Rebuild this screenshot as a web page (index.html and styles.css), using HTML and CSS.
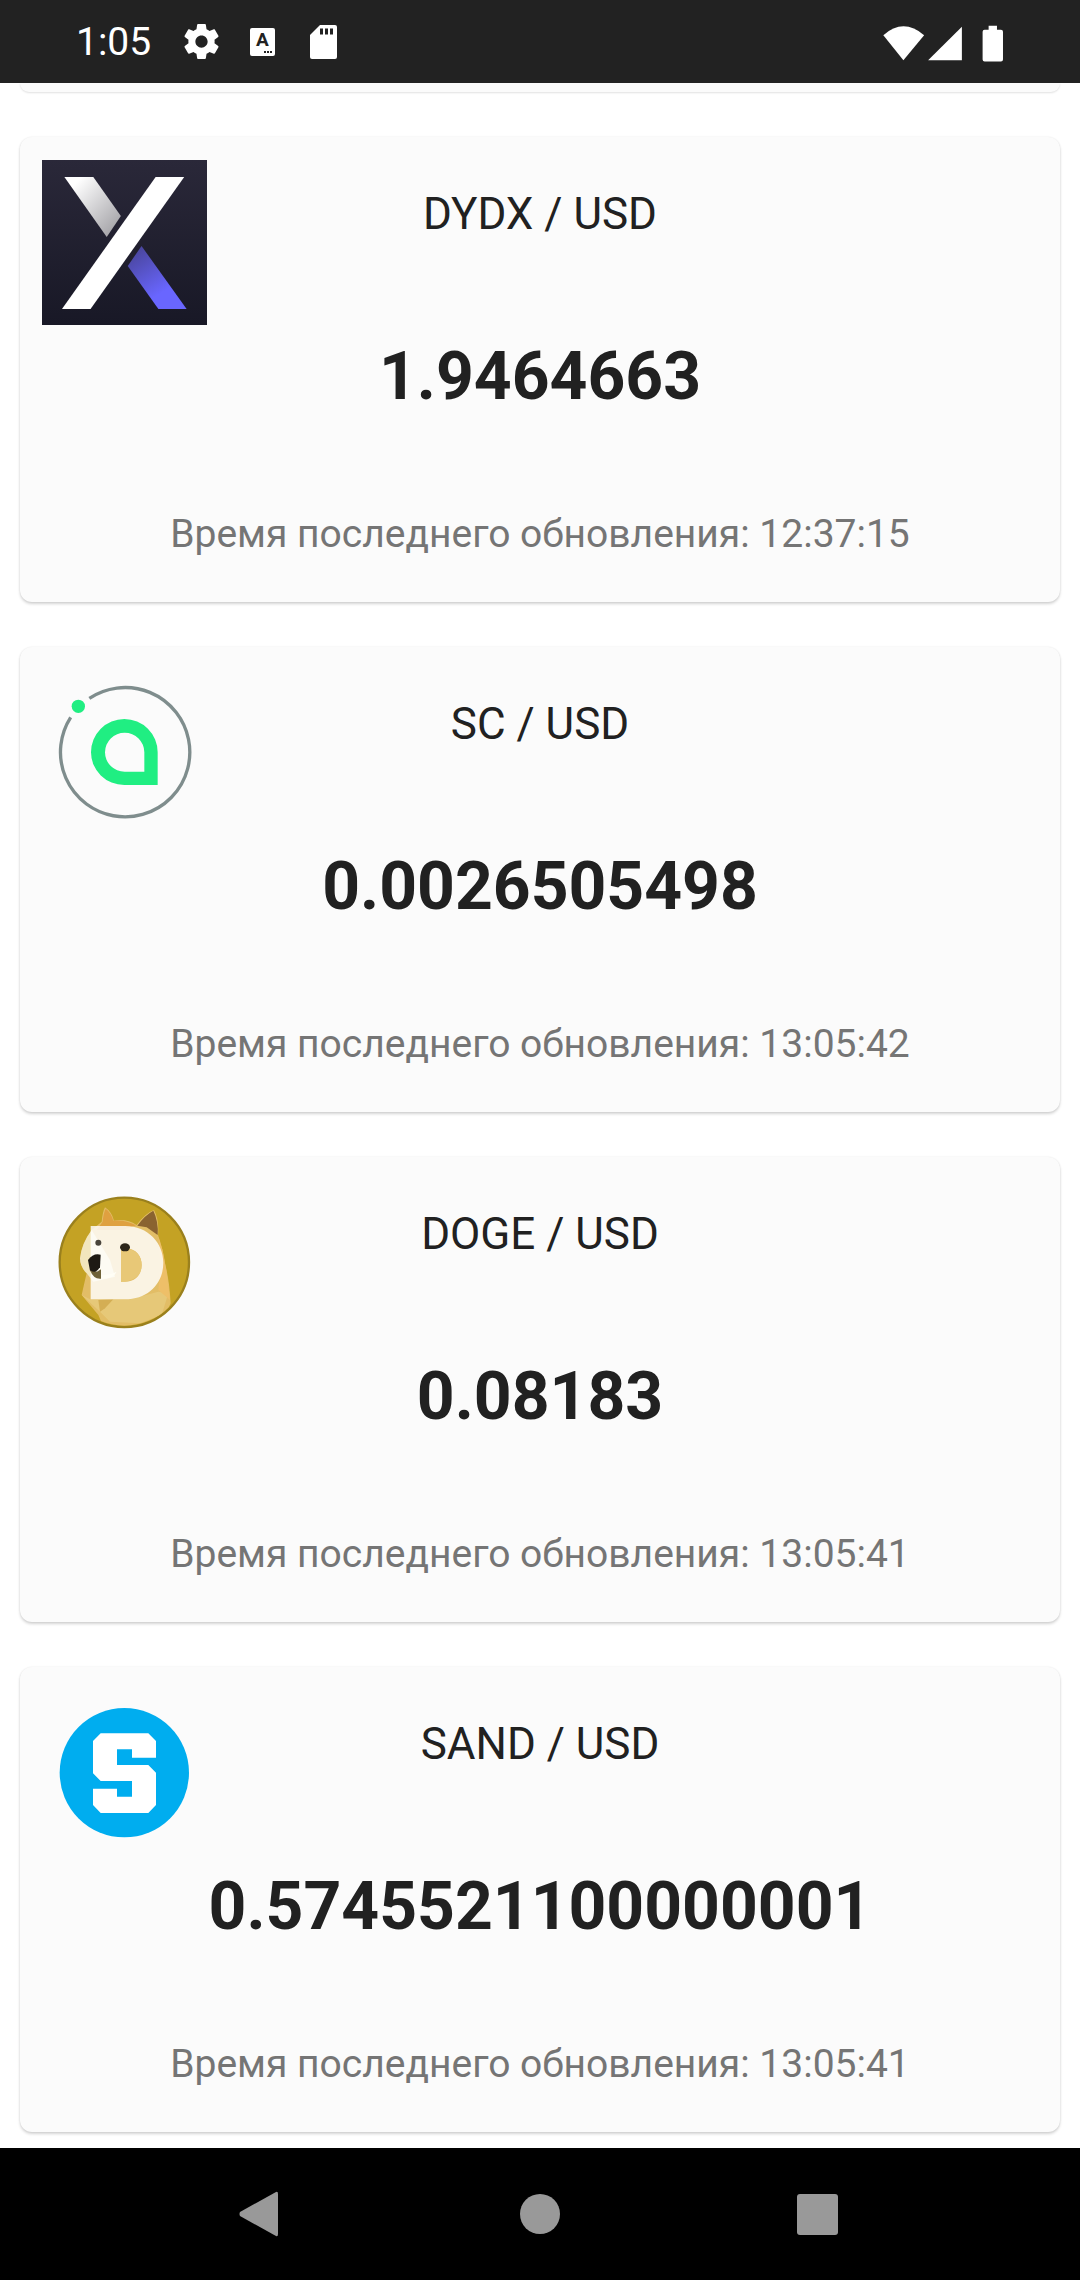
FILE: index.html
```html
<!DOCTYPE html>
<html lang="ru">
<head>
<meta charset="utf-8">
<title>Курсы</title>
<link rel="stylesheet" href="styles.css">
</head>
<body>
<div class="screen">
  <header class="status">
    <div class="status-left">
      <span class="clock">1:05</span>
      <svg class="ic-gear" viewBox="2 2 20 20"><path fill="#fff" d="M19.43 12.98c.04-.32.07-.64.07-.98s-.03-.66-.07-.98l2.11-1.65c.19-.15.24-.42.12-.64l-2-3.46c-.12-.22-.39-.3-.61-.22l-2.49 1c-.52-.4-1.08-.73-1.69-.98l-.38-2.65C14.46 2.18 14.25 2 14 2h-4c-.25 0-.46.18-.49.42l-.38 2.65c-.61.25-1.17.59-1.69.98l-2.49-1c-.23-.09-.49 0-.61.22l-2 3.46c-.13.22-.07.49.12.64l2.11 1.65c-.04.32-.07.65-.07.98s.03.66.07.98l-2.11 1.65c-.19.15-.24.42-.12.64l2 3.46c.12.22.39.3.61.22l2.49-1c.52.4 1.08.73 1.69.98l.38 2.65c.03.24.24.42.49.42h4c.25 0 .46-.18.49-.42l.38-2.65c.61-.25 1.17-.59 1.69-.98l2.49 1c.23.09.49 0 .61-.22l2-3.46c.12-.22.07-.49-.12-.64l-2.11-1.65zM12 15.5c-1.93 0-3.5-1.57-3.5-3.5s1.57-3.5 3.5-3.5 3.5 1.57 3.5 3.5-1.57 3.5-3.5 3.5z"/></svg>
      <svg class="ic-a" viewBox="0 0 25 28">
        <rect width="25" height="28" rx="2" fill="#fff"/>
        <text x="12.500" y="18" class="ic-a-letter">A</text>
        <rect x="14" y="23" width="2" height="2" fill="#222"/><rect x="17" y="23" width="2" height="2" fill="#222"/><rect x="20" y="23" width="2" height="2" fill="#222"/>
      </svg>
      <svg class="ic-sd" viewBox="0 0 27 34">
        <path fill="#fff" d="M10 0H25a2 2 0 0 1 2 2V32a2 2 0 0 1-2 2H2a2 2 0 0 1-2-2V10Z"/>
        <path fill="#222" d="M10 3.500h3V9.500h-3ZM15 3.500h3V9.500h-3ZM20 3.500h3V9.500h-3Z"/>
      </svg>
    </div>
    <svg class="ic-right" viewBox="300 70 380 116">
      <path fill="#fff" d="M370 178L310 103Q370 50 432 103Z"/>
      <path fill="#fff" d="M545 78V178H444Z"/>
      <path fill="#fff" d="M625 75H650V87H662Q668 87 668 93V176Q668 182 662 182H613Q607 182 607 176V93Q607 87 613 87H625Z"/>
    </svg>
  </header>

  <main class="list">
    <div class="card card-stub"></div>

    <article class="card">
      <svg class="coin" viewBox="122 480 495 495">
        <defs>
          <linearGradient id="xbg" x1="0" y1="0" x2="0" y2="1"><stop offset="0" stop-color="#2a2839"/><stop offset="1" stop-color="#181826"/></linearGradient>
          <linearGradient id="xgrey" x1="0" y1="0" x2="1" y2="1"><stop offset="0.15" stop-color="#fff"/><stop offset="1" stop-color="#99989d"/></linearGradient>
          <linearGradient id="xblue" x1="0" y1="0" x2="0.6" y2="1"><stop offset="0" stop-color="#45418f"/><stop offset="0.8" stop-color="#6966ff"/></linearGradient>
        </defs>
        <rect x="122" y="480" width="495" height="495" fill="url(#xbg)"/>
        <g transform="translate(122 0) scale(1.033 1) translate(-122 0)">
          <path fill="url(#xgrey)" d="M187 531H271L351 648L310 711Z"/>
          <path fill="url(#xblue)" d="M411 738L542 927H460L371 798Z"/>
          <path fill="#fff" d="M452 531H535L263 927H180Z"/>
        </g>
      </svg>
      <div class="info">
        <h2 class="pair">DYDX / USD</h2>
        <p class="price">1.9464663</p>
        <p class="updated">Время последнего обновления: 12:37:15</p>
      </div>
    </article>

    <article class="card">
      <svg class="coin" viewBox="36 0 495 495">
        <path fill="none" stroke="#7f8d8d" stroke-width="10" d="M178 85A194 194 0 1 1 122 142"/>
        <circle cx="145" cy="109" r="20" fill="#20ee82"/>
        <path fill="#20ee82" fill-rule="evenodd" d="M183 247A100 100 0 0 1 383 247V345H283A100 98 0 0 1 183 247ZM225 247A59 59 0 0 1 343 247V305H284A59 58 0 0 1 225 247Z"/>
      </svg>
      <div class="info">
        <h2 class="pair">SC / USD</h2>
        <p class="price">0.0026505498</p>
        <p class="updated">Время последнего обновления: 13:05:42</p>
      </div>
    </article>

    <article class="card">
      <svg class="coin" viewBox="36 0 495 495">
        <defs><clipPath id="dclip"><circle cx="283" cy="247" r="190"/></clipPath></defs>
        <circle cx="283" cy="247" r="194" fill="#c4a224" stroke="#9a801d" stroke-width="7"/>
        <g clip-path="url(#dclip)">
          <path fill="#e2bd66" d="M215 125Q218 95 225 82Q245 95 252 122Q290 115 320 135Q345 100 372 90Q388 120 384 165Q400 210 405 250Q418 300 422 370L395 430L330 450L220 440L205 405L155 345Q165 300 170 280Q150 260 150 235Q155 190 185 150Z"/>
          <path fill="#dfa040" d="M218 125Q220 100 227 86Q243 98 250 122Q285 118 318 136L280 150H200Z"/>
          <path fill="#8a6330" d="M322 137Q345 105 370 92Q386 125 383 165L350 142Z"/>
          <path fill="#f2e6bd" d="M150 235Q155 190 185 150L240 240L255 290L190 305L170 280Q150 260 150 235Z"/>
          <path fill="#e6c878" d="M155 345L210 395L240 425L330 430L395 405L415 340L385 335L300 358H180Z"/>
          <path fill="#d4ae54" d="M205 360L250 358L225 385L210 395Z"/>
          <path fill="#eebf68" d="M385 170Q400 210 405 250Q415 300 420 360L385 330Q395 250 385 170Z"/>
        </g>
        <path fill="#fff" fill-opacity=".82" fill-rule="evenodd" d="M182 138H285C355 138 400 190 400 248C400 310 355 358 285 358H182ZM273 205V305H285C320 305 335 280 335 255C335 230 320 205 285 205Z"/>
        <path fill="#e8c877" d="M273 205H290C320 210 335 230 335 255C335 280 320 300 285 305H273Z"/>
        <path fill="#1e1a14" d="M174 240Q190 218 212 224L210 262Q195 285 180 272Z"/>
        <path fill="#6f6238" d="M180 270Q195 282 213 268L213 296Q190 298 180 270Z"/>
        <path fill="#fffef5" d="M213 285Q240 285 260 275Q250 297 213 296Z"/>
        <ellipse cx="205" cy="188" rx="9" ry="9" fill="#4a453c"/>
        <ellipse cx="285" cy="202" rx="15" ry="12" fill="#2c261a"/>
      </svg>
      <div class="info">
        <h2 class="pair">DOGE / USD</h2>
        <p class="price">0.08183</p>
        <p class="updated">Время последнего обновления: 13:05:41</p>
      </div>
    </article>

    <article class="card">
      <svg class="coin" viewBox="36 0 495 495">
        <circle cx="283" cy="248" r="194" fill="#00adef"/>
        <path fill="#fff" d="M212 130H355L378 153V203H306V178H261V225H355L378 248V345L355 369H212L189 345V296H261V320H306V273H212L189 250V153Z"/>
      </svg>
      <div class="info">
        <h2 class="pair">SAND / USD</h2>
        <p class="price">0.5745521100000001</p>
        <p class="updated">Время последнего обновления: 13:05:41</p>
      </div>
    </article>
  </main>

  <nav class="navbar">
    <svg class="nav-back" viewBox="0 0 39 46"><path fill="#999" d="M37 1Q39 0 39 3V43Q39 46 37 45L1 25Q0 23 1 21Z"/></svg>
    <span class="nav-home"></span>
    <span class="nav-recent"></span>
  </nav>
</div>
</body>
</html>
```

FILE: styles.css
```css
* { box-sizing: border-box; }
html, body { margin: 0; padding: 0; background: #fff; }
body { font-family: Roboto, "Noto Sans", sans-serif; }
.screen {
  width: 1080px;
  height: 2280px;
  display: flex;
  flex-direction: column;
  overflow: hidden;
}
.status {
  height: 83px;
  flex: none;
  background: #222;
  display: flex;
  align-items: center;
  justify-content: space-between;
  padding: 0 73px 0 76px;
  position: relative;
  z-index: 1;
}
.status-left { display: flex; align-items: center; }
.clock { color: #fff; font-size: 39px; line-height: 44px; margin-right: 33px; }
.ic-gear { width: 35px; height: 35px; margin-right: 31px; display: block; }
.ic-a { width: 25px; height: 28px; margin-right: 35px; display: block; }
.ic-a-letter { font: 700 19px Roboto, sans-serif; fill: #222; text-anchor: middle; }
.ic-sd { width: 27px; height: 34px; display: block; }
.ic-right { width: 127px; height: 39px; display: block; margin-top: 3px; }

.list {
  flex: 1;
  min-height: 0;
  display: flex;
  flex-direction: column;
  gap: 45px;
  padding: 0 20px;
  overflow: hidden;
}
.card {
  flex: none;
  height: 465px;
  background: #fbfbfb;
  border-radius: 12px;
  box-shadow: 0 2px 3px rgba(0, 0, 0, .17), 0 0 2px rgba(0, 0, 0, .08);
  display: grid;
  grid-template: 1fr / 1fr;
}
.card-stub {
  height: 9px;
  border-radius: 0 0 12px 12px;
  box-shadow: 0 1px 2px rgba(0, 0, 0, .12);
}
.coin {
  grid-area: 1 / 1;
  width: 165px;
  height: 165px;
  margin: 23px 0 0 22px;
  display: block;
}
.info {
  grid-area: 1 / 1;
  display: flex;
  flex-direction: column;
  align-items: center;
  padding-top: 51px;
}
.pair { margin: 0; font-size: 44px; line-height: 52px; font-weight: 400; color: #212121; }
.price { margin: 98px 0 0; font-size: 66px; line-height: 78px; font-weight: 700; color: #212121; }
.updated { margin: 95px 0 0; font-size: 39px; line-height: 46px; color: #757575; }

.navbar {
  height: 132px;
  flex: none;
  background: #000;
  display: flex;
  align-items: center;
  padding-left: 239px;
}
.nav-back { width: 39px; height: 46px; margin-right: 242px; display: block; }
.nav-home { width: 40px; height: 40px; border-radius: 50%; background: #999; margin-right: 237px; }
.nav-recent { width: 41px; height: 41px; border-radius: 3px; background: #999; }
```
